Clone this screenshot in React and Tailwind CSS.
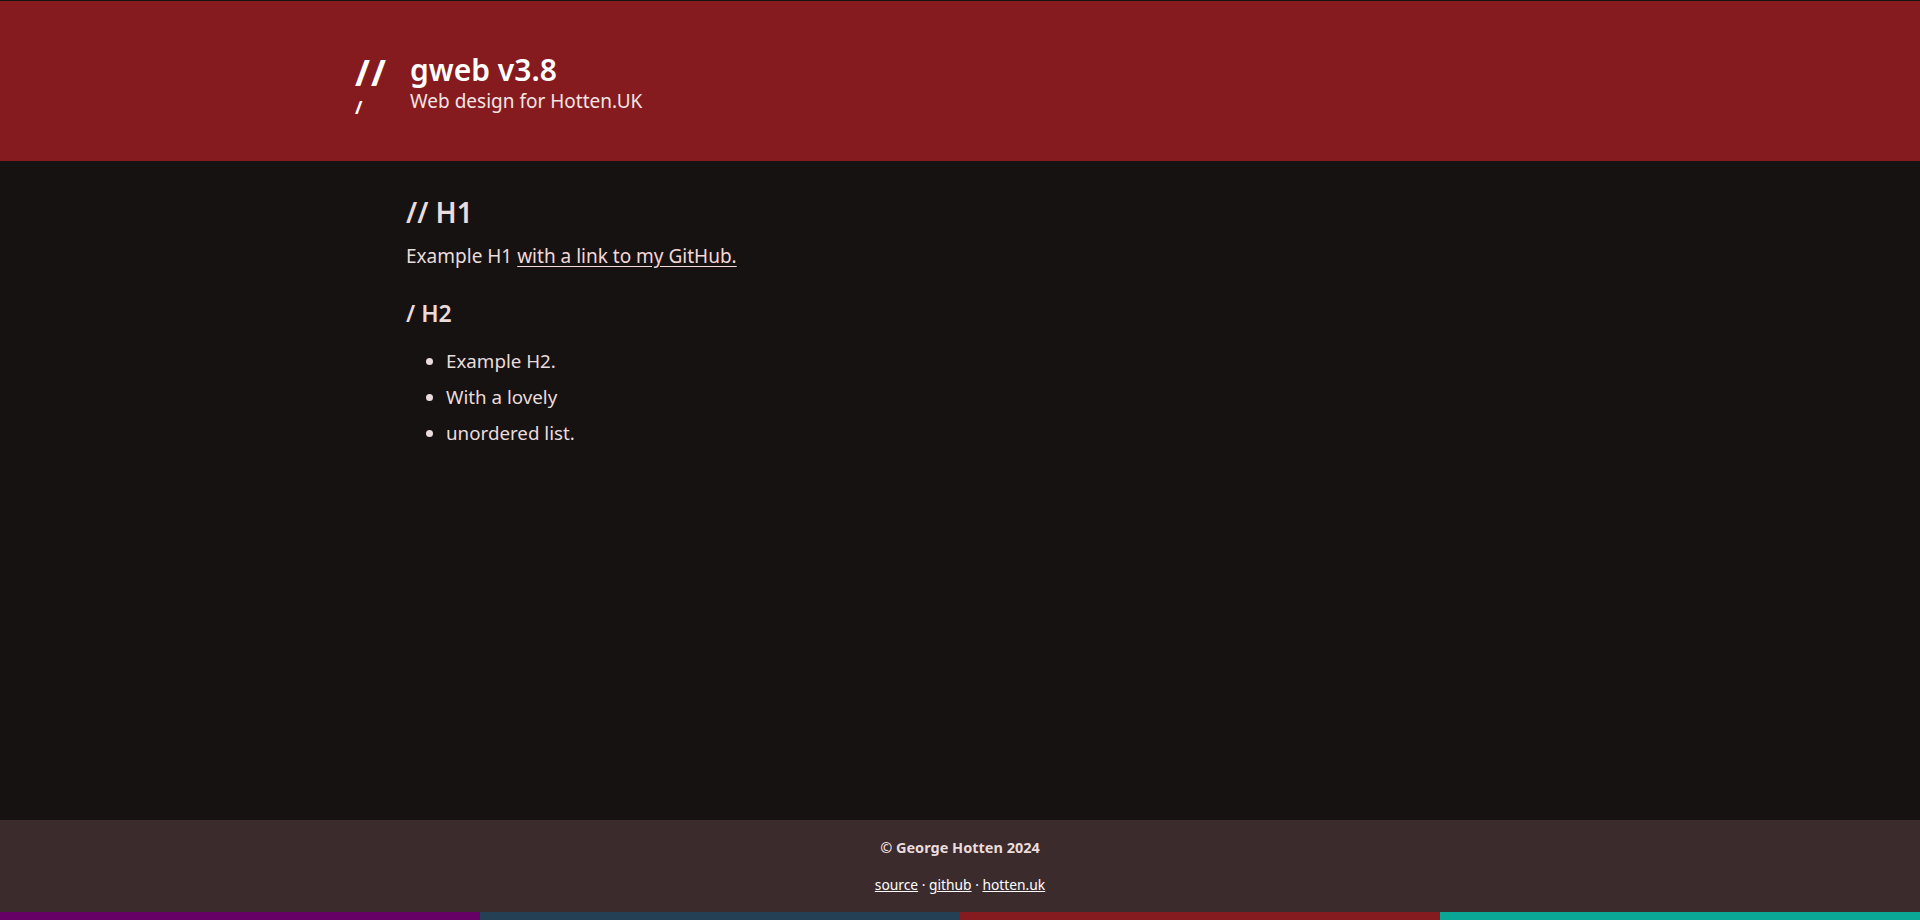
export default function App() {
  return (
    <div
      className="min-h-[920px] flex flex-col bg-[#161212] text-[#eadcdc]"
      style={{ fontFamily: '"Noto Sans", "Open Sans", sans-serif' }}
    >
      <header className="h-[161px] bg-[#851b1e] border-t border-[#161212]">
        <div className="w-[1210px] mx-auto flex items-start pt-[50px]">
          <div className="w-[55px] mt-[4px] flex flex-col text-white font-bold leading-none">
            <span className="text-[36px] tracking-[1px] leading-[36px]">//</span>
            <span className="text-[18px] leading-[18px] mt-[7px]">/</span>
          </div>
          <div className="flex flex-col">
            <h1 className="text-[30px] font-semibold text-white leading-[38px]">gweb v3.8</h1>
            <p className="text-[19px] text-[#f3e4e4] leading-[24px]">Web design for Hotten.UK</p>
          </div>
        </div>
      </header>

      <main className="flex-1">
        <div className="w-[1210px] mx-auto pl-[51px] pt-[32px]">
          <h2 className="text-[28px] font-semibold leading-[38px]">// H1</h2>
          <p className="text-[19px] mt-[11px] leading-[28px]">
            Example H1{" "}
            <a href="#" className="underline underline-offset-[3px] text-[#f4d8d8]">
              with a link to my GitHub.
            </a>
          </p>
          <h3 className="text-[23px] font-semibold mt-[27px] leading-[32px]">/ H2</h3>
          <ul className="mt-[14px] list-disc pl-[40px] text-[18.75px] leading-[36px] marker:text-[#eadcdc]">
            <li>Example H2.</li>
            <li>With a lovely</li>
            <li>unordered list.</li>
          </ul>
        </div>
      </main>

      <footer className="h-[92px] bg-[#3b2b2d] flex flex-col items-center pt-[17px] text-[#eadcdc]">
        <p className="font-bold text-[14.5px] leading-[20px]">© George Hotten 2024</p>
        <p className="mt-[18px] text-[13.8px] leading-[20px] text-white">
          <a href="#" className="underline">source</a>
          {" · "}
          <a href="#" className="underline">github</a>
          {" · "}
          <a href="#" className="underline">hotten.uk</a>
        </p>
      </footer>
      <div className="h-[8px] grid grid-cols-4">
        <div className="bg-[#660066]" />
        <div className="bg-[#234055]" />
        <div className="bg-[#851b1e]" />
        <div className="bg-[#0aa696]" />
      </div>
    </div>
  );
}
